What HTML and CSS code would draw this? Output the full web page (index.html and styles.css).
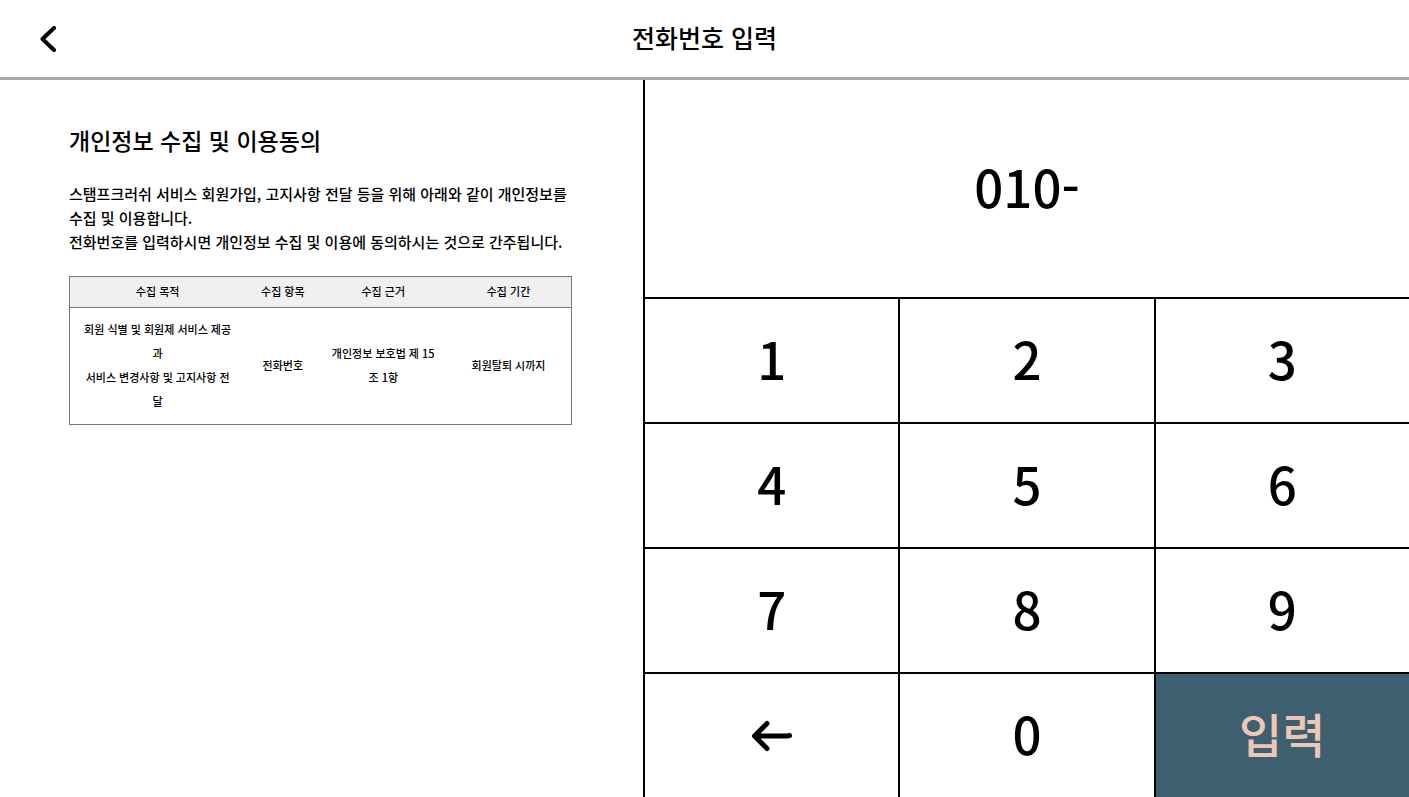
FILE: index.html
```html
<!DOCTYPE html>
<html lang="ko">
<head>
<meta charset="utf-8">
<meta name="viewport" content="width=device-width, initial-scale=1">
<title>전화번호 입력</title>
<link rel="stylesheet" href="styles.css">
</head>
<body class="page">
  <header class="header">
    <button class="back" type="button" aria-label="뒤로">
      <svg class="back-icon" viewBox="0 0 16 26" aria-hidden="true"><path d="M14 2 2.500 13 14 24"/></svg>
    </button>
    <h1 class="title">전화번호 입력</h1>
  </header>
  <main class="main">
    <section class="privacy">
      <h2 class="privacy-title">개인정보 수집 및 이용동의</h2>
      <p class="privacy-text">스탬프크러쉬 서비스 회원가입, 고지사항 전달 등을 위해 아래와 같이 개인정보를<br>수집 및 이용합니다.<br>전화번호를 입력하시면 개인정보 수집 및 이용에 동의하시는 것으로 간주됩니다.</p>
      <table class="terms">
        <colgroup><col class="col-purpose"><col class="col-item"><col class="col-basis"><col class="col-period"></colgroup>
        <thead>
          <tr><th scope="col">수집 목적</th><th scope="col">수집 항목</th><th scope="col">수집 근거</th><th scope="col">수집 기간</th></tr>
        </thead>
        <tbody>
          <tr>
            <td>회원 식별 및 회원제 서비스 제공<br>과<br>서비스 변경사항 및 고지사항 전<br>달</td>
            <td>전화번호</td>
            <td>개인정보 보호법 제 15<br>조 1항</td>
            <td>회원탈퇴 시까지</td>
          </tr>
        </tbody>
      </table>
    </section>
    <section class="dialer">
      <input class="phone" type="text" value="010-" aria-label="전화번호" readonly>
      <div class="keypad">
        <button class="key" type="button">1</button>
        <button class="key" type="button">2</button>
        <button class="key" type="button">3</button>
        <button class="key" type="button">4</button>
        <button class="key" type="button">5</button>
        <button class="key" type="button">6</button>
        <button class="key" type="button">7</button>
        <button class="key" type="button">8</button>
        <button class="key" type="button">9</button>
        <button class="key key-erase" type="button" aria-label="지우기">
          <svg class="erase-icon" viewBox="0 0 40 32" aria-hidden="true"><path d="M15 3.500 2.500 16 15 28.500M3 16H35L37.500 15.500"/></svg>
        </button>
        <button class="key" type="button">0</button>
        <button class="key key-submit" type="submit">입력</button>
      </div>
    </section>
  </main>
</body>
</html>
```
FILE: styles.css
```css
*, *::before, *::after { box-sizing: border-box; }

.page {
  display: flex;
  flex-direction: column;
  min-height: 100vh;
  margin: 0;
  background: #fff;
  color: #000;
  font-family: "Noto Sans CJK KR", sans-serif;
  font-weight: 500;
}

.header {
  display: grid;
  grid-template-columns: 1fr auto 1fr;
  align-items: center;
  height: 80px;
  padding: 0 40px;
  border-bottom: 3px solid #aaa;
}

.back {
  display: flex;
  justify-self: start;
  padding: 0;
  border: 0;
  background: none;
  cursor: pointer;
}

.back-icon {
  width: 16px;
  height: 26px;
}

.back-icon path,
.erase-icon path {
  fill: none;
  stroke: #000;
  stroke-width: 4;
  stroke-linecap: round;
  stroke-linejoin: round;
}

.title {
  margin: 0;
  padding-bottom: 4px;
  font-size: 25px;
  font-weight: 500;
  line-height: 36px;
}

.main {
  display: grid;
  flex: 1;
  grid-template-columns: 645fr 764fr;
}

.privacy {
  padding: 43px 71px 0 69px;
  border-right: 2px solid #000;
}

.privacy-title {
  margin: 0 0 24px;
  font-size: 23px;
  font-weight: 500;
  line-height: 35px;
}

.privacy-text {
  margin: 0 0 22px;
  font-size: 15px;
  line-height: 24px;
  white-space: nowrap;
}

.terms {
  width: 100%;
  border: 1px solid #777;
  border-collapse: collapse;
  table-layout: fixed;
  font-size: 11px;
  line-height: 24px;
  text-align: center;
  white-space: nowrap;
}

.col-purpose { width: 35%; }
.col-item { width: 15%; }
.col-basis, .col-period { width: 25%; }

.terms th {
  padding: 2px 0 4px;
  border-bottom: 1px solid #777;
  background: #f0f0f0;
  font-weight: 500;
}

.terms td { padding: 9px 0 11px; }

.dialer {
  display: grid;
  grid-template-rows: 217fr 500fr;
  min-width: 0;
}

.phone {
  width: 100%;
  padding: 0 0 6px;
  border: 0;
  background: none;
  color: inherit;
  font: inherit;
  font-size: 51px;
  text-align: center;
  outline: 0;
}

.keypad {
  display: grid;
  grid-template-columns: repeat(3, 1fr);
  grid-template-rows: repeat(4, 1fr);
  gap: 2px;
  border-top: 2px solid #000;
  background: #000;
}

.key {
  display: flex;
  align-items: center;
  justify-content: center;
  min-width: 0;
  padding: 0 0 6px;
  border: 0;
  background: #fff;
  color: #000;
  font: inherit;
  font-size: 51px;
  line-height: 60px;
  cursor: pointer;
}

.key-erase { padding: 0; }

.erase-icon {
  width: 40px;
  height: 32px;
}

.erase-icon path { stroke-width: 5; }

.key-submit {
  background: #3d6070;
  color: #eec6b4;
  font-size: 47px;
}
```
